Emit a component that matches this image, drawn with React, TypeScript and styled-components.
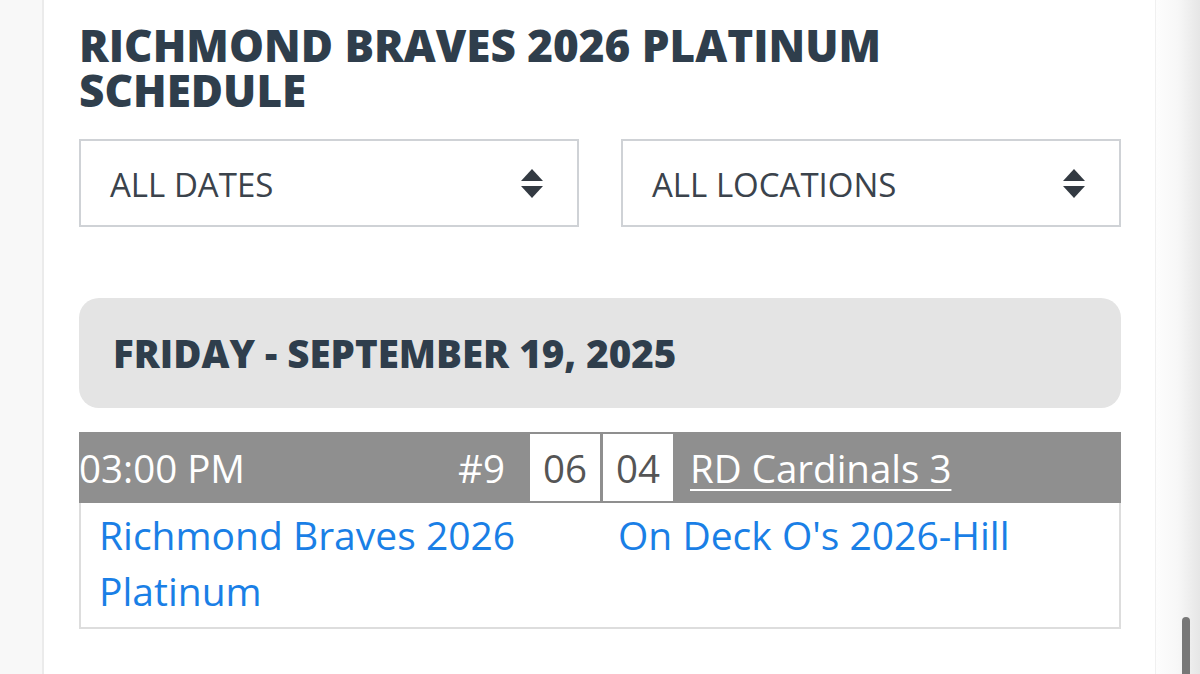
import React, { FC } from 'react';
import styled, { createGlobalStyle } from 'styled-components';

const GlobalStyle = createGlobalStyle`
    html, body {
        margin: 0;
        padding: 0;
        background: #ffffff;
    }
    body {
        font-family: 'Open Sans', 'Noto Sans', sans-serif;
    }
`;

const PageWrapper = styled.div`
    display: flex;
    width: 1200px;
    height: 674px;
    overflow: hidden;
    position: relative;
`;

const LeftGutter = styled.div`
    flex: 0 0 42px;
    background: #f8f8f8;
    border-right: 2px solid #ebebeb;
`;

const Content = styled.div`
    flex: 1;
    padding: 23px 34px 0 35px;
    box-sizing: border-box;
`;

const ScrollTrack = styled.div`
    flex: 0 0 44px;
    position: relative;
    border-left: 1px solid #f0f0f0;
    background: linear-gradient(to right, #fdfdfd 0%, #f7f7f7 50%, #e6e6e6 100%);
`;

const ScrollThumb = styled.div`
    position: absolute;
    left: 26px;
    top: 617px;
    width: 8px;
    height: 80px;
    border-radius: 4px;
    background: #777777;
`;

const Title = styled.h1`
    margin: 0;
    font-size: 44px;
    line-height: 45px;
    font-weight: 800;
    color: #2f3e4c;
    text-transform: uppercase;
`;

const Filters = styled.div`
    display: grid;
    grid-template-columns: 1fr 1fr;
    gap: 42px;
    margin-top: 26px;
`;

const Select = styled.div`
    height: 88px;
    box-sizing: border-box;
    border: 2px solid #cfd2d6;
    display: flex;
    align-items: center;
    justify-content: space-between;
    padding: 2px 34px 0 29px;
    font-size: 33px;
    color: #3b434c;
`;

const DayHeader = styled.div`
    margin-top: 71px;
    height: 110px;
    border-radius: 20px;
    background: #e4e4e4;
    display: flex;
    align-items: center;
    padding-left: 34px;
    font-size: 38.5px;
    font-weight: 800;
    color: #2f3e4c;
    text-transform: uppercase;
`;

const Game = styled.div`
    margin-top: 24px;
`;

const GameBar = styled.div`
    height: 71px;
    background: #8f8f8f;
    display: flex;
    align-items: stretch;
    font-size: 38.5px;
    color: #ffffff;
`;

const TimeCell = styled.div`
    flex: 0 0 451px;
    box-sizing: border-box;
    display: flex;
    align-items: center;
    justify-content: space-between;
    padding: 0 25px 0 0;
`;

const ScoreBox = styled.div`
    width: 70px;
    margin: 2px 3px 2px 0;
    background: #ffffff;
    color: #555555;
    display: flex;
    align-items: center;
    justify-content: center;
`;

const Opponent = styled.a`
    align-self: center;
    margin-left: 14px;
    color: #ffffff;
    text-decoration: underline;
    text-underline-offset: 6px;
    text-decoration-thickness: 2px;
`;

const Teams = styled.div`
    display: grid;
    grid-template-columns: 1fr 1fr;
    border: 2px solid #dddddd;
    border-top: none;
`;

const TeamCell = styled.a`
    padding: 4px 18px 8px 18px;
    font-size: 39px;
    line-height: 56px;
    color: #1a7fe6;
    text-decoration: none;
`;

const SortIcon: FC = () => (
    <svg width="22" height="30" viewBox="0 0 22 30">
        <path d="M11 0 L22 12 L0 12 Z" fill="#333a42" />
        <path d="M0 17 L22 17 L11 29 Z" fill="#333a42" />
    </svg>
);

const App: FC = () => (
    <>
        <GlobalStyle />
        <PageWrapper>
            <LeftGutter />
            <Content>
                <Title>
                    Richmond Braves 2026 Platinum
                    <br />
                    Schedule
                </Title>
                <Filters>
                    <Select>
                        <span>ALL DATES</span>
                        <SortIcon />
                    </Select>
                    <Select>
                        <span>ALL LOCATIONS</span>
                        <SortIcon />
                    </Select>
                </Filters>
                <DayHeader>Friday - September 19, 2025</DayHeader>
                <Game>
                    <GameBar>
                        <TimeCell>
                            <span>03:00 PM</span>
                            <span>#9</span>
                        </TimeCell>
                        <ScoreBox>06</ScoreBox>
                        <ScoreBox>04</ScoreBox>
                        <Opponent>RD Cardinals 3</Opponent>
                    </GameBar>
                    <Teams>
                        <TeamCell>Richmond Braves 2026 Platinum</TeamCell>
                        <TeamCell>On Deck O's 2026-Hill</TeamCell>
                    </Teams>
                </Game>
            </Content>
            <ScrollTrack>
                <ScrollThumb />
            </ScrollTrack>
        </PageWrapper>
    </>
);

export default App;
